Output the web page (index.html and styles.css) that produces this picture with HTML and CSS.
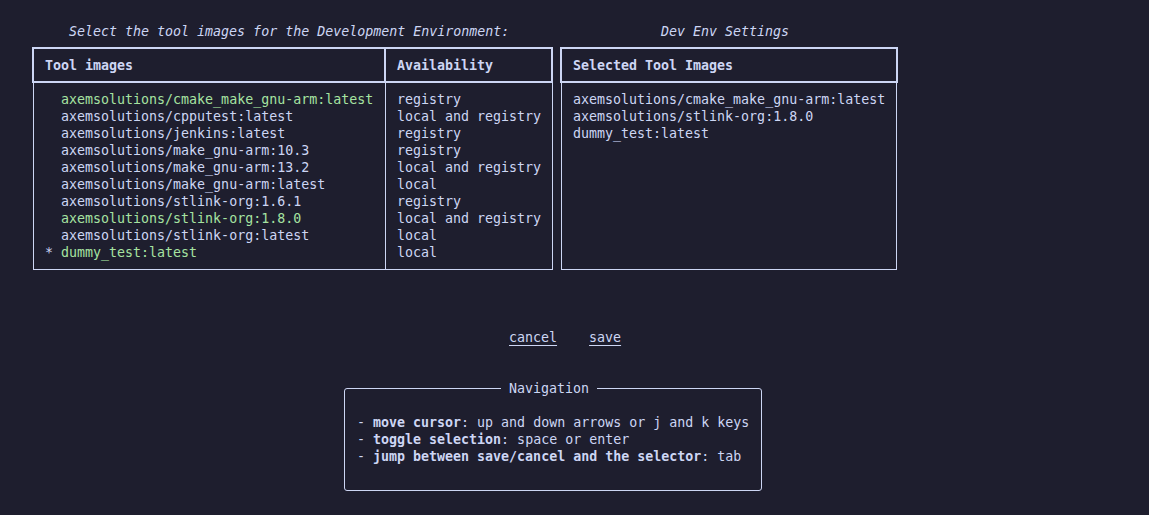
FILE: index.html
```html
<!DOCTYPE html>
<html>
<head>
<meta charset="utf-8">
<link rel="stylesheet" href="styles.css">
</head>
<body>
<div class="app">
  <div class="panels">
    <section class="panel panel-left">
      <div class="caption caption-left">Select the tool images for the Development Environment:</div>
      <div class="thead thead-left">
        <div class="th th-name">Tool images</div>
        <div class="th th-avail">Availability</div>
      </div>
      <div class="tbody tbody-left">
        <div class="col col-name">
          <div class="row sel"><span class="mark">  </span>axemsolutions/cmake_make_gnu-arm:latest</div>
          <div class="row"><span class="mark">  </span>axemsolutions/cpputest:latest</div>
          <div class="row"><span class="mark">  </span>axemsolutions/jenkins:latest</div>
          <div class="row"><span class="mark">  </span>axemsolutions/make_gnu-arm:10.3</div>
          <div class="row"><span class="mark">  </span>axemsolutions/make_gnu-arm:13.2</div>
          <div class="row"><span class="mark">  </span>axemsolutions/make_gnu-arm:latest</div>
          <div class="row"><span class="mark">  </span>axemsolutions/stlink-org:1.6.1</div>
          <div class="row sel"><span class="mark">  </span>axemsolutions/stlink-org:1.8.0</div>
          <div class="row"><span class="mark">  </span>axemsolutions/stlink-org:latest</div>
          <div class="row sel"><span class="mark cursor">* </span>dummy_test:latest</div>
        </div>
        <div class="col col-avail">
          <div class="row">registry</div>
          <div class="row">local and registry</div>
          <div class="row">registry</div>
          <div class="row">registry</div>
          <div class="row">local and registry</div>
          <div class="row">local</div>
          <div class="row">registry</div>
          <div class="row">local and registry</div>
          <div class="row">local</div>
          <div class="row">local</div>
        </div>
      </div>
    </section>
    <section class="panel panel-right">
      <div class="caption caption-right">Dev Env Settings</div>
      <div class="thead thead-right">
        <div class="th th-selected">Selected Tool Images</div>
      </div>
      <div class="tbody tbody-right">
        <div class="col col-selected">
          <div class="row">axemsolutions/cmake_make_gnu-arm:latest</div>
          <div class="row">axemsolutions/stlink-org:1.8.0</div>
          <div class="row">dummy_test:latest</div>
        </div>
      </div>
    </section>
  </div>
  <div class="buttons">
    <span class="btn">cancel</span>
    <span class="btn">save</span>
  </div>
  <div class="nav">
    <div class="nav-title">Navigation</div>
    <div class="nav-line">- <b>move cursor</b>: up and down arrows or j and k keys</div>
    <div class="nav-line">- <b>toggle selection</b>: space or enter</div>
    <div class="nav-line">- <b>jump between save/cancel and the selector</b>: tab</div>
  </div>
</div>
</body>
</html>
```

FILE: styles.css
```css
html, body {
  margin: 0;
  padding: 0;
  background: #1e1e2e;
}
body {
  width: 1149px;
  height: 515px;
  overflow: hidden;
  color: #cdd6f4;
  font-family: "DejaVu Sans Mono", monospace;
  font-size: 13.3px;
  line-height: 17px;
}
.app {
  padding-top: 23px;
}
.panels {
  display: flex;
  padding-left: 32px;
  gap: 7px;
}
.panel {
  display: flex;
  flex-direction: column;
}
.panel-left { width: 521px; }
.panel-right { width: 338px; }
.caption {
  font-style: italic;
  white-space: pre;
  height: 17px;
  margin-bottom: 7px;
}
.caption-left { padding-left: 37px; }
.caption-right { padding-left: 101px; }

.thead {
  display: flex;
  border: 2px solid #cdd6f4;
  font-weight: bold;
}
.th {
  padding: 8px 0 7px 11px;
  white-space: pre;
}
.th-name { width: 339px; }
.th-avail {
  flex: 1;
  border-left: 2px solid #cdd6f4;
}
.th-selected { flex: 1; }

.tbody {
  display: flex;
  border: 1px solid #cdd6f4;
  border-top: none;
  height: 186px;
}
.tbody-left { margin-left: 1px; }
.tbody-right { margin: 0 1px; }
.col {
  padding: 8px 0 0 11px;
}
.col-name {
  width: 340px;
  border-right: 1px solid #cdd6f4;
}
.col-avail { flex: 1; }
.col-selected { flex: 1; }
.row {
  white-space: pre;
  height: 17px;
}
.row.sel { color: #a6e3a1; }
.mark { color: #cdd6f4; }

.buttons {
  display: flex;
  gap: 32px;
  padding-left: 509px;
  margin-top: 59px;
}
.btn {
  text-decoration: underline;
  text-underline-offset: 3px;
}

.nav {
  position: relative;
  width: 392px;
  margin: 42px 0 0 344px;
  border: 1px solid #cdd6f4;
  border-radius: 3px;
  padding: 25px 12px 25px 12px;
}
.nav-title {
  position: absolute;
  top: -9px;
  left: 156px;
  padding: 0 8px;
  background: #1e1e2e;
  white-space: pre;
}
.nav-line {
  white-space: pre;
  height: 17px;
}
.nav-line b { font-weight: bold; }
```
